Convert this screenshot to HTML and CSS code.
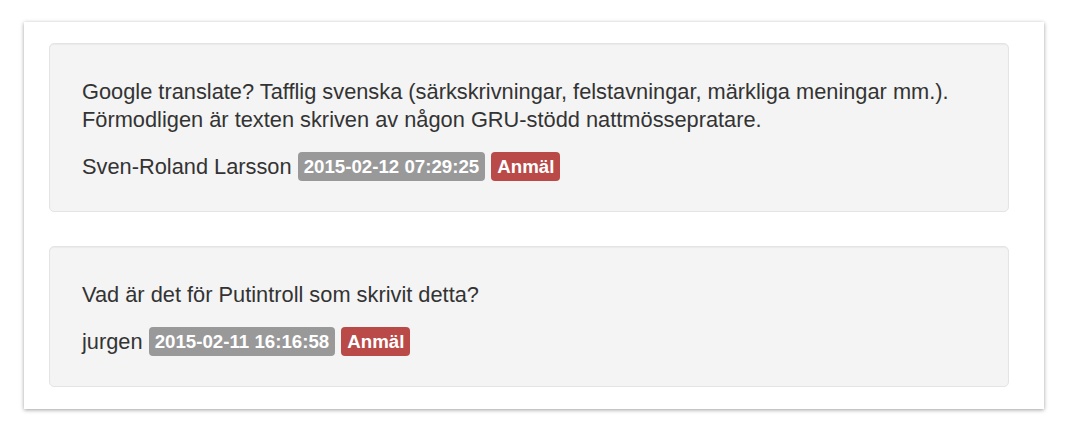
FILE: index.html
```html
<!DOCTYPE html>
<html lang="sv">
<head>
<meta charset="utf-8">
<title>Kommentarer</title>
<link rel="stylesheet" href="styles.css">
</head>
<body>
<div class="card">
  <div class="well">
    <p class="comment">Google translate? Tafflig svenska (särkskrivningar, felstavningar, märkliga meningar mm.).<br>Förmodligen är texten skriven av någon GRU-stödd nattmössepratare.</p>
    <div class="meta">Sven-Roland Larsson <span class="label label-date">2015-02-12 07:29:25</span> <span class="label label-report">Anmäl</span></div>
  </div>
  <div class="well">
    <p class="comment">Vad är det för Putintroll som skrivit detta?</p>
    <div class="meta">jurgen <span class="label label-date">2015-02-11 16:16:58</span> <span class="label label-report">Anmäl</span></div>
  </div>
</div>
</body>
</html>
```
FILE: styles.css
```css
html, body {
  margin: 0;
  padding: 0;
  background: #fff;
}
body {
  font-family: "Liberation Sans", Arial, Helvetica, sans-serif;
  color: #333;
  width: 1070px;
  height: 430px;
  overflow: hidden;
}
.card {
  margin: 22px 0 0 24px;
  width: 1020px;
  height: 387px;
  box-sizing: border-box;
  padding: 21px 35px 0 25px;
  background: #fff;
  box-shadow: 0 1px 4px rgba(0, 0, 0, 0.38);
  display: flex;
  flex-direction: column;
  gap: 34px;
}
.well {
  background: #f4f4f4;
  border: 1px solid #e4e4e4;
  border-radius: 5px;
  box-shadow: inset 0 1px 1px rgba(0, 0, 0, 0.04);
  padding: 34px 32px 30px;
}
.comment {
  margin: 0 0 18px;
  font-size: 21.8px;
  line-height: 28px;
}
.meta {
  font-size: 21.8px;
  line-height: 28px;
}
.label {
  display: inline-block;
  font-size: 18.7px;
  font-weight: bold;
  line-height: 19px;
  color: #fff;
  padding: 5px 6px;
  border-radius: 4px;
  vertical-align: 1px;
}
.label-date {
  background: #999;
}
.label-report {
  background: #b94a48;
}
```
